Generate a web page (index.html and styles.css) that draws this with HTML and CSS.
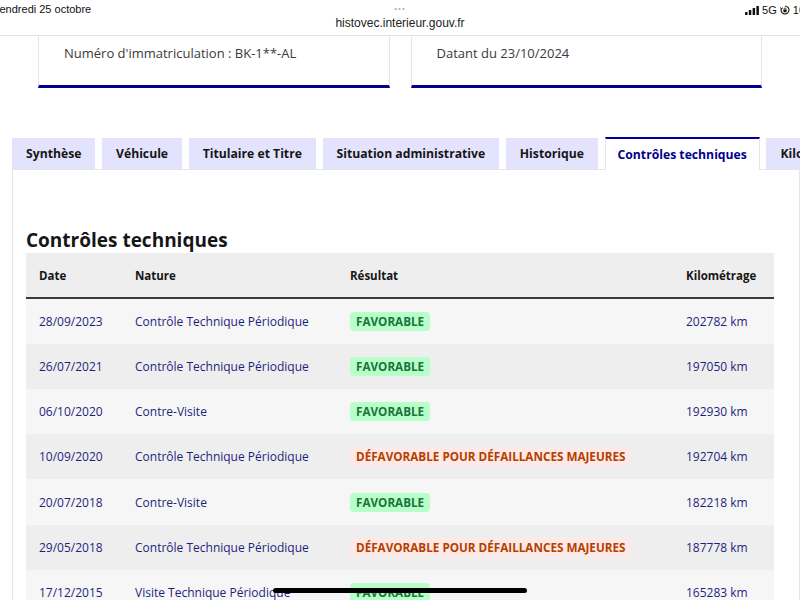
FILE: index.html
```html
<!DOCTYPE html>
<html lang="fr">
<head>
    <meta charset="UTF-8">
    <meta name="viewport" content="width=device-width, initial-scale=1.0">
    <title>HistoVec - Contrôles techniques</title>
    <link rel="stylesheet" href="styles.css">
</head>
<body>
    <header class="statusbar">
        <span class="clock">vendredi 25 octobre</span>
        <div class="address">
            <span class="dots">&bull;&bull;&bull;</span>
            <span class="url">histovec.interieur.gouv.fr</span>
        </div>
        <span class="indicators">
            <svg class="signal" width="14" height="9" viewBox="0 0 14 9">
                <rect x="0" y="6" width="2.5" height="3" rx="0.5"/>
                <rect x="3.8" y="4" width="2.5" height="5" rx="0.5"/>
                <rect x="7.6" y="2" width="2.5" height="7" rx="0.5"/>
                <rect x="11.4" y="0" width="2.5" height="9" rx="0.5"/>
            </svg>
            <span>5G</span>
            <svg class="lock" width="10" height="10" viewBox="0 0 10 10">
                <path d="M5 1 A4 4 0 1 1 1.3 3.5" fill="none" stroke="#111" stroke-width="1.1"/>
                <path d="M0.4 2.4 L1.4 3.9 L2.8 2.9" fill="none" stroke="#111" stroke-width="1"/>
                <rect x="3.4" y="4.6" width="3.2" height="2.6" rx="0.4" fill="#111"/>
                <path d="M4 4.7 V3.9 A1 1 0 0 1 6 3.9 V4.7" fill="none" stroke="#111" stroke-width="0.8"/>
            </svg>
            <span>100 %</span>
        </span>
    </header>

    <section class="summary">
        <div class="summary-card">Numéro d'immatriculation : BK-1**-AL</div>
        <div class="summary-card">Datant du 23/10/2024</div>
    </section>

    <nav class="tabs">
        <button class="tab">Synthèse</button>
        <button class="tab">Véhicule</button>
        <button class="tab">Titulaire et Titre</button>
        <button class="tab">Situation administrative</button>
        <button class="tab">Historique</button>
        <button class="tab tab-active">Contrôles techniques</button>
        <button class="tab">Kilométrage</button>
    </nav>

    <main class="panel">
        <h2>Contrôles techniques</h2>
        <table class="ct-table">
            <thead>
                <tr>
                    <th class="col-date">Date</th>
                    <th class="col-nature">Nature</th>
                    <th class="col-result">Résultat</th>
                    <th class="col-km">Kilométrage</th>
                </tr>
            </thead>
            <tbody>
                <tr>
                    <td>28/09/2023</td>
                    <td>Contrôle Technique Périodique</td>
                    <td><span class="badge badge-ok">Favorable</span></td>
                    <td>202782 km</td>
                </tr>
                <tr>
                    <td>26/07/2021</td>
                    <td>Contrôle Technique Périodique</td>
                    <td><span class="badge badge-ok">Favorable</span></td>
                    <td>197050 km</td>
                </tr>
                <tr>
                    <td>06/10/2020</td>
                    <td>Contre-Visite</td>
                    <td><span class="badge badge-ok">Favorable</span></td>
                    <td>192930 km</td>
                </tr>
                <tr>
                    <td>10/09/2020</td>
                    <td>Contrôle Technique Périodique</td>
                    <td><span class="badge badge-ko">Défavorable pour défaillances majeures</span></td>
                    <td>192704 km</td>
                </tr>
                <tr>
                    <td>20/07/2018</td>
                    <td>Contre-Visite</td>
                    <td><span class="badge badge-ok">Favorable</span></td>
                    <td>182218 km</td>
                </tr>
                <tr>
                    <td>29/05/2018</td>
                    <td>Contrôle Technique Périodique</td>
                    <td><span class="badge badge-ko">Défavorable pour défaillances majeures</span></td>
                    <td>187778 km</td>
                </tr>
                <tr>
                    <td>17/12/2015</td>
                    <td>Visite Technique Périodique</td>
                    <td><span class="badge badge-ok">Favorable</span></td>
                    <td>165283 km</td>
                </tr>
            </tbody>
        </table>
    </main>

    <div class="home-indicator"></div>
</body>
</html>
```

FILE: styles.css
```css
html, body {
    margin: 0;
    padding: 0;
    height: 100%;
    overflow: hidden;
}
body {
    font-family: "Open Sans", "Liberation Sans", sans-serif;
    background-color: #fff;
    color: #161616;
    position: relative;
}

/* safari top bar */
.statusbar {
    display: grid;
    grid-template-columns: 1fr auto 1fr;
    height: 35px;
    border-bottom: 1px solid #e2e2e2;
    font-family: "Liberation Sans", Arial, sans-serif;
    font-size: 11px;
    color: #111;
}
.clock {
    margin-left: -6px;
    padding-top: 3px;
}
.address {
    display: flex;
    flex-direction: column;
    align-items: center;
}
.dots {
    font-size: 8px;
    color: #b5b5b5;
    letter-spacing: 1px;
    line-height: 14px;
    padding-top: 2px;
}
.url {
    font-size: 12px;
    line-height: 14px;
    color: #222;
}
.indicators {
    justify-self: end;
    display: flex;
    align-items: center;
    gap: 3px;
    height: 20px;
    margin-right: -24px;
    font-size: 11px;
}
.signal {
    fill: #111;
}

/* vehicle summary */
.summary {
    display: flex;
    gap: 21px;
    padding: 0 38px;
}
.summary-card {
    flex: 1;
    height: 41px;
    padding: 8px 0 0 25px;
    border-left: 1px solid #e5e5e5;
    border-right: 1px solid #e5e5e5;
    border-bottom: 3px solid #000091;
    font-size: 13px;
    color: #3a3a3a;
}

/* tabs */
.tabs {
    display: flex;
    gap: 6.6px;
    align-items: flex-end;
    margin-top: 49px;
    padding-left: 12px;
    white-space: nowrap;
    position: relative;
    z-index: 1;
}
.tab {
    flex: none;
    height: 31px;
    padding: 0 14px;
    border: none;
    background-color: #e3e3fd;
    font-family: inherit;
    font-size: 12.2px;
    font-weight: bold;
    color: #161616;
}
.tab-active {
    height: 33px;
    margin-bottom: -1px;
    padding: 0 12px 1px;
    background-color: #fff;
    border-top: 2px solid #000091;
    border-left: 1px solid #e5e5e5;
    border-right: 1px solid #e5e5e5;
    color: #000091;
}

/* tab panel */
.panel {
    display: block;
    margin-left: 12px;
    padding: 57px 24px 0 13px;
    border-left: 1px solid #e5e5e5;
    border-top: 1px solid #e5e5e5;
    border-right: 1px solid #e5e5e5;
    height: 600px;
}
.panel h2 {
    margin: 0;
    font-size: 19px;
    line-height: 26px;
    font-weight: bold;
    color: #161616;
}

.ct-table {
    width: 748px;
    border-collapse: collapse;
    font-size: 12px;
}
.ct-table th,
.ct-table td {
    height: 45.3px;
    padding: 0 0 0 13px;
    text-align: left;
    box-sizing: border-box;
}
.ct-table th {
    background-color: #eeeeee;
    border-bottom: 2px solid #3a3a3a;
    font-size: 11.5px;
    font-weight: bold;
    color: #161616;
}
.col-date { width: 96px; }
.col-nature { width: 215px; }
.col-result { width: 336px; }
.col-km { width: 101px; }

.ct-table td {
    color: #1f1f7d;
}
.ct-table tbody tr:nth-child(odd) {
    background-color: #f6f6f6;
}
.ct-table tbody tr:nth-child(even) {
    background-color: #eeeeee;
}

.badge {
    display: inline-block;
    height: 19px;
    line-height: 19px;
    padding: 0 6px;
    border-radius: 4px;
    font-size: 11.7px;
    font-weight: bold;
    text-transform: uppercase;
}
.badge-ok {
    background-color: #b8fec9;
    color: #18753c;
}
.badge-ko {
    background-color: #ffe9e6;
    color: #b34000;
}

.home-indicator {
    position: absolute;
    left: 273px;
    bottom: 7px;
    width: 254px;
    height: 5px;
    border-radius: 3px;
    background-color: #000;
}
```
